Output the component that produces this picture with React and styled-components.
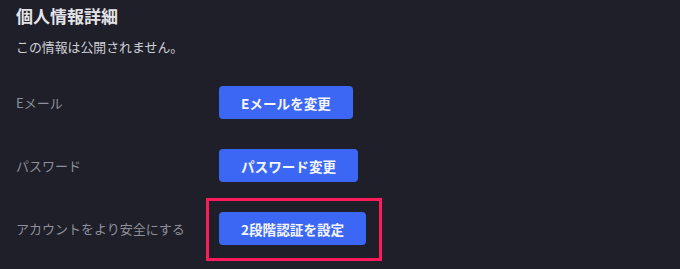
import React from 'react';
import styled, { createGlobalStyle } from 'styled-components';

const GlobalStyle = createGlobalStyle`
  html, body {
    margin: 0;
    padding: 0;
    background: #1e1f29;
  }
  body {
    font-family: "Noto Sans CJK JP", "Noto Sans", sans-serif;
  }
`;

const rows = [
    { label: 'Eメール', action: 'Eメールを変更' },
    { label: 'パスワード', action: 'パスワード変更' },
    { label: 'アカウントをより安全にする', action: '2段階認証を設定', marked: true },
];

function App() {
    return (
        <>
        <GlobalStyle />
        <Page>
            <Title>個人情報詳細</Title>
            <Note>この情報は公開されません。</Note>
            <Settings>
                {rows.map((row) => (
                    <Row key={row.label}>
                        <Label>{row.label}</Label>
                        <Cell>
                            <Mark marked={row.marked}>
                                <ActionButton>{row.action}</ActionButton>
                            </Mark>
                        </Cell>
                    </Row>
                ))}
            </Settings>
        </Page>
        </>
    );
}

export default App;

const Page = styled.div`
    width: 680px;
    height: 269px;
    box-sizing: border-box;
    padding: 4px 16px 0 16px;
    background: #1e1f29;
    overflow: hidden;
`

const Title = styled.h2`
    margin: 0;
    font-size: 17px;
    line-height: 24px;
    font-weight: 700;
    color: #e4e4e8;
`

const Note = styled.p`
    margin: 9px 0 0 0;
    font-size: 12.9px;
    line-height: 20px;
    color: #cfd0d6;
`

const Settings = styled.div`
    display: grid;
    row-gap: 30px;
    margin-top: 29px;
`

const Row = styled.div`
    display: grid;
    grid-template-columns: 203px auto;
    align-items: center;
    height: 33px;
`

const Label = styled.span`
    font-size: 13px;
    color: #8e8f98;
`

const Cell = styled.div`
    display: flex;
`

const Mark = styled.span`
    position: relative;
    display: inline-flex;

    &::after {
        content: '';
        display: ${(p) => (p.marked ? 'block' : 'none')};
        position: absolute;
        top: -14px;
        bottom: -16px;
        left: -13px;
        right: -16px;
        border: 3px solid #ff1a5c;
        pointer-events: none;
    }
`

const ActionButton = styled.button`
    height: 33px;
    padding: 0 22px;
    border: none;
    border-radius: 4px;
    background: #3c67f4;
    color: #f4f6ff;
    font-family: inherit;
    font-size: 13.6px;
    font-weight: 700;
    cursor: pointer;
`
